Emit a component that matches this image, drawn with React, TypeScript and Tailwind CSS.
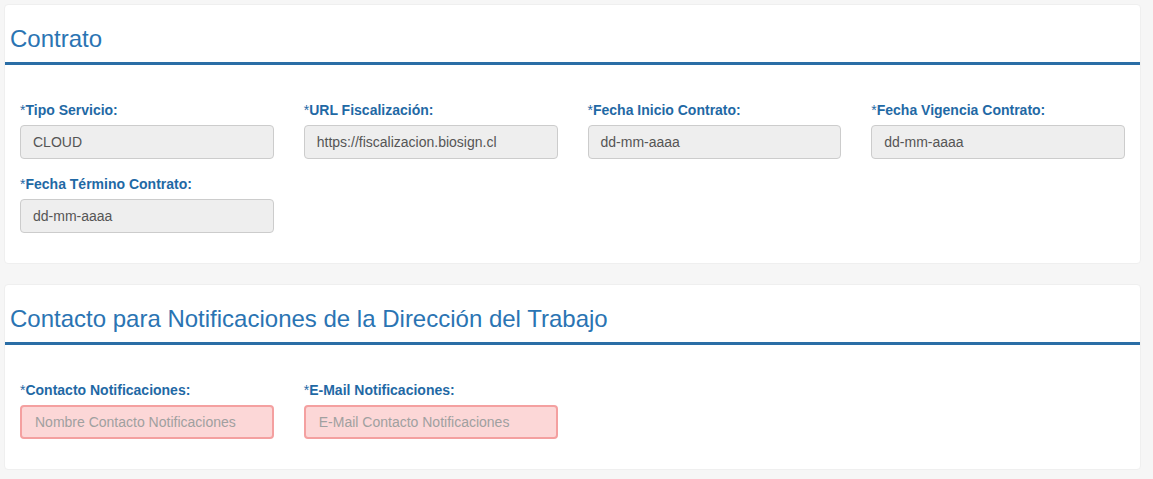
import React from "react";

type Field = {
  label: string;
  value?: string;
  placeholder?: string;
  invalid?: boolean;
};

const contratoFields: Field[] = [
  { label: "Tipo Servicio:", value: "CLOUD" },
  { label: "URL Fiscalización:", value: "https://fiscalizacion.biosign.cl" },
  { label: "Fecha Inicio Contrato:", value: "dd-mm-aaaa" },
  { label: "Fecha Vigencia Contrato:", value: "dd-mm-aaaa" },
  { label: "Fecha Término Contrato:", value: "dd-mm-aaaa" },
];

const contactoFields: Field[] = [
  { label: "Contacto Notificaciones:", placeholder: "Nombre Contacto Notificaciones", invalid: true },
  { label: "E-Mail Notificaciones:", placeholder: "E-Mail Contacto Notificaciones", invalid: true },
];

function FormField({ field }: { field: Field }) {
  return (
    <div className="flex flex-col">
      <label className="text-[14px] leading-[20px] font-bold text-[#1f69a5] mb-[5px]">
        <span className="font-normal">*</span>
        {field.label}
      </label>
      {field.invalid ? (
        <div className="h-[34px] rounded-[4px] border-2 border-[#f4a0a0] bg-[#fcd7d7] px-[13px] flex items-center text-[14px] text-[#a0a0a0]">
          {field.placeholder}
        </div>
      ) : (
        <div className="h-[34px] rounded-[4px] border border-[#cccccc] bg-[#eeeeee] px-[12px] flex items-center text-[14px] text-[#555555]">
          {field.value}
        </div>
      )}
    </div>
  );
}

function Panel({ title, fields }: { title: string; fields: Field[] }) {
  return (
    <section className="w-[1137px] ml-[4px] bg-white rounded-[4px] border border-[#efefef]">
      <h2 className="pt-[21px] pb-[10px] pl-[5px] text-[24px] leading-[26px] text-[#2a74b3] border-b-[3px] border-[#2a6ea6]">
        {title}
      </h2>
      <div className="grid grid-cols-4 gap-x-[30px] gap-y-[15px] pl-[15px] pr-[15px] pt-[35px] pb-[30px]">
        {fields.map((f) => (
          <FormField key={f.label} field={f} />
        ))}
      </div>
    </section>
  );
}

export default function App() {
  return (
    <div
      className="w-[1153px] h-[479px] bg-[#f6f6f6] pt-[4px] flex flex-col gap-[20px]"
      style={{ fontFamily: '"Liberation Sans", Arial, sans-serif' }}
    >
      <Panel title="Contrato" fields={contratoFields} />
      <Panel title="Contacto para Notificaciones de la Dirección del Trabajo" fields={contactoFields} />
    </div>
  );
}
